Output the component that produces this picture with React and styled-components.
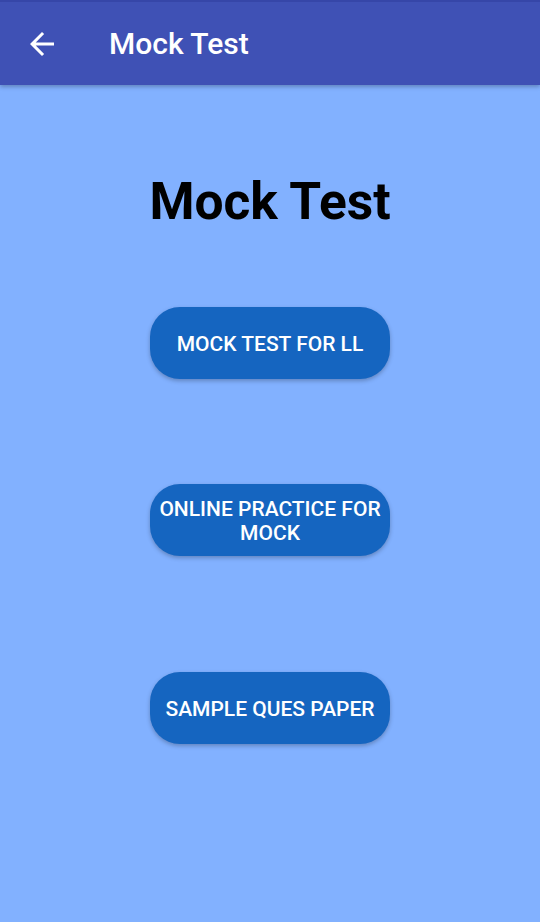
import React from "react";
import styled, { createGlobalStyle } from "styled-components";

const Global = createGlobalStyle`
  html, body { margin: 0; padding: 0; height: 100%; }
  body { font-family: Roboto, "Noto Sans", sans-serif; background: #82b1ff; }
  #root { min-height: 100vh; }
`;

const Screen = styled.div`
  min-height: 922px;
  background: #82b1ff;
  display: flex;
  flex-direction: column;
`;

const AppBar = styled.header`
  height: 85px;
  background: #3f51b5;
  border-top: 2px solid #3646a8;
  box-sizing: border-box;
  display: flex;
  align-items: center;
  padding-left: 24px;
  box-shadow: 0 2px 4px rgba(0, 0, 0, 0.25);
  position: relative;
  z-index: 1;
`;

const BackButton = styled.button`
  background: none;
  border: none;
  padding: 0;
  width: 36px;
  height: 36px;
  display: flex;
  align-items: center;
  justify-content: center;
  color: #fff;
  cursor: pointer;
`;

const BarTitle = styled.h1`
  margin: 0 0 0 49px;
  font-size: 30px;
  font-weight: 500;
  color: #fff;
  letter-spacing: 0;
`;

const Content = styled.main`
  display: flex;
  flex-direction: column;
  align-items: center;
  padding-top: 86px;
`;

const Heading = styled.h2`
  margin: 0;
  font-size: 51.5px;
  font-weight: 700;
  color: #000;
  line-height: 62px;
`;

const Button = styled.button`
  width: 240px;
  height: 72px;
  border: none;
  border-radius: 30px;
  background: #1565c0;
  color: #fff;
  font-family: Roboto, "Noto Sans", sans-serif;
  font-size: 21px;
  font-weight: 500;
  line-height: 24px;
  text-transform: uppercase;
  padding: 1px 4px 0;
  box-shadow: 0 2px 4px rgba(0, 0, 0, 0.25);
  margin-top: ${(p) => p.$gap}px;
  cursor: pointer;
`;

const ArrowIcon = () => (
  <svg width="36" height="36" viewBox="0 0 24 24" fill="#fff">
    <path d="M20 11H7.83l5.59-5.59L12 4l-8 8 8 8 1.41-1.41L7.83 13H20v-2z" />
  </svg>
);

export default function App() {
  return (
    <>
      <Global />
      <Screen>
        <AppBar>
          <BackButton aria-label="Back">
            <ArrowIcon />
          </BackButton>
          <BarTitle>Mock Test</BarTitle>
        </AppBar>
        <Content>
          <Heading>Mock Test</Heading>
          <Button $gap={74}>Mock Test for LL</Button>
          <Button $gap={105}>Online Practice for Mock</Button>
          <Button $gap={116}>Sample Ques Paper</Button>
        </Content>
      </Screen>
    </>
  );
}
